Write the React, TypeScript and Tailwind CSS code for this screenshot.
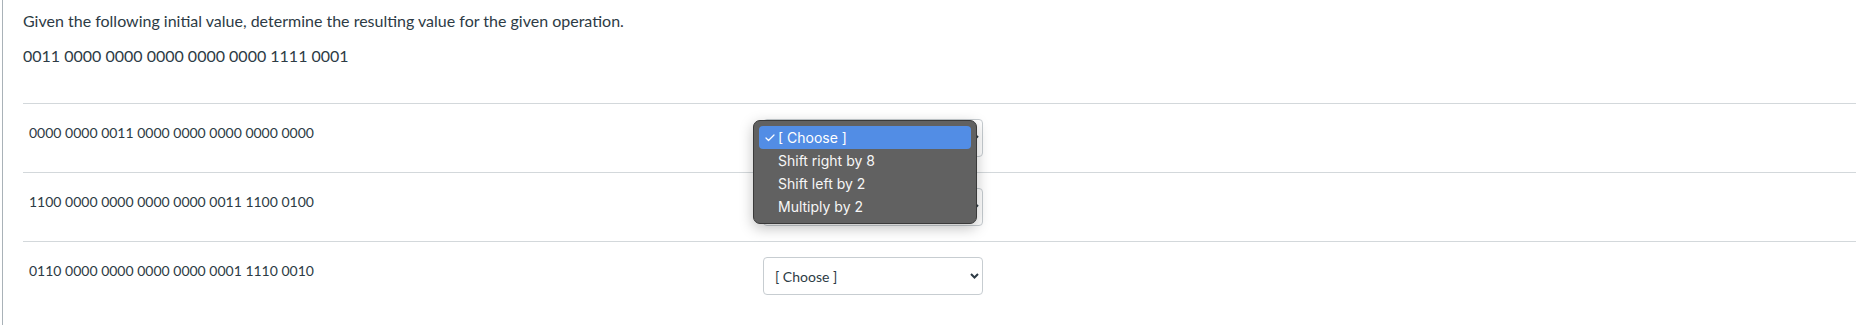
import {Check} from "lucide-react"

const rows = [
  "0000 0000 0011 0000 0000 0000 0000 0000",
  "1100 0000 0000 0000 0000 0011 1100 0100",
  "0110 0000 0000 0000 0000 0001 1110 0010",
]

const options = ["[ Choose ]", "Shift right by 8", "Shift left by 2", "Multiply by 2"]

const Chevron = () => (
  <svg width="9" height="6" viewBox="0 0 9 6" fill="none">
    <path d="M1 1l3.5 3.5L8 1" stroke="#2d3b45" strokeWidth="2" />
  </svg>
)

const SelectBox = () => (
  <div className="flex h-[38px] w-[220px] items-center justify-between rounded-[4px] border border-[#c7cdd1] bg-white pr-[3px] pl-[11px] text-[14px] text-[#2d3b45]">
    <span>[ Choose ]</span>
    <Chevron />
  </div>
)

const PopupMenu = () => (
  <div className="absolute top-[1px] left-[-10px] z-10 w-[224px] rounded-[7px] border border-[#3a3a3a] bg-[#616161] p-[5px] font-['Inter',sans-serif] text-[14px] shadow-[0_4px_14px_rgba(0,0,0,0.25)]">
    {options.map((opt, i) => (
      <div
        key={opt}
        className={
          i === 0
            ? "flex h-[23px] items-center rounded-[4px] bg-[#528de5] pl-[5px] text-white"
            : "flex h-[23px] items-center pl-[5px] text-[#f7f7f7]"
        }
      >
        <span className="w-[14px]">{i === 0 && <Check size={12} strokeWidth={2.5} />}</span>
        <span>{opt}</span>
      </div>
    ))}
  </div>
)

export default function App() {
  return (
    <div className="h-[325px] w-full overflow-hidden bg-white pl-[2px] font-['Lato',sans-serif] text-[#2d3b45]">
      <div className="h-full border-l border-[#a9b2b8] pl-[20px]">
        <p className="pt-[9px] text-[16px] leading-[24px]">
          Given the following initial value, determine the resulting value for the given operation.
        </p>
        <p className="mt-[11px] text-[16px] leading-[24px]">0011 0000 0000 0000 0000 0000 1111 0001</p>

        <div className="mt-[35px]">
          {rows.map((row, i) => (
            <div key={row} className="flex border-t border-[#d3d8db] py-[15px]">
              <div className="w-[740px] pt-[4px] pl-[6px] text-[14px] leading-[20px]">{row}</div>
              <div className="relative">
                <SelectBox />
                {i === 0 && <PopupMenu />}
              </div>
            </div>
          ))}
        </div>
      </div>
    </div>
  )
}
